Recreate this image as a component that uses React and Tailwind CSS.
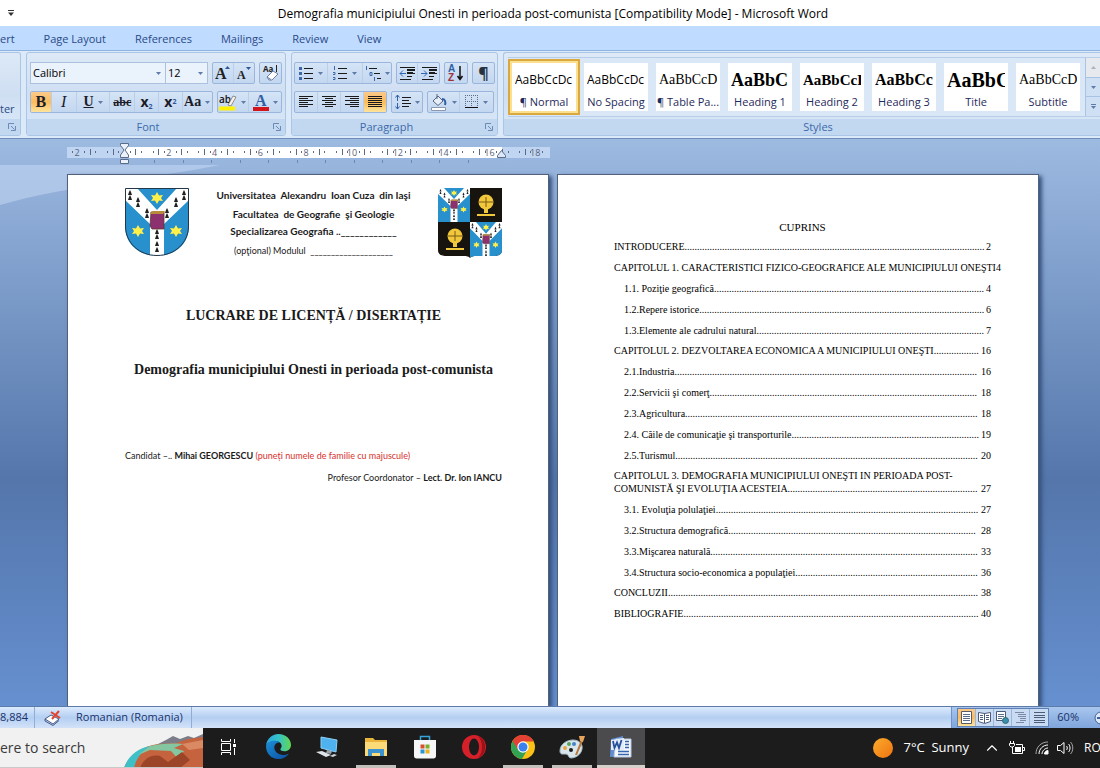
import { ChevronUp } from 'lucide-react';

const tabs = ['Page Layout', 'References', 'Mailings', 'Review', 'View'];

const styles = [
  { name: 'No Spacing', sample: 'AaBbCcDc', look: 'font-["Open_Sans"] text-xs' },
  { name: '¶ Table Pa...', sample: 'AaBbCcD', look: 'font-["Liberation_Serif"] text-sm' },
  { name: 'Heading 1', sample: 'AaBbC', look: 'font-["Liberation_Serif"] text-lg font-bold' },
  { name: 'Heading 2', sample: 'AaBbCcD', look: 'font-["Liberation_Serif"] text-[15px] font-bold' },
  { name: 'Heading 3', sample: 'AaBbCc', look: 'font-["Liberation_Serif"] text-base font-bold' },
  { name: 'Title', sample: 'AaBbC', look: 'font-["Liberation_Serif"] text-xl font-bold' },
  { name: 'Subtitle', sample: 'AaBbCcD', look: 'font-["Liberation_Serif"] text-sm' },
];

// dots is the length of the leader between a heading and its page number
const contents = [
  { title: 'INTRODUCERE', page: 2, dots: 120 },
  {
    title: 'CAPITOLUL 1. CARACTERISTICI FIZICO-GEOGRAFICE ALE MUNICIPIULUI ONEŞTI',
    page: 4,
    dots: 0,
    items: [
      ['1.1. Poziţie geografică', 4, 108],
      ['1.2.Repere istorice', 6, 114],
      ['1.3.Elemente ale cadrului natural', 7, 91],
    ],
  },
  {
    title: 'CAPITOLUL 2. DEZVOLTAREA ECONOMICA A MUNICIPIULUI ONEŞTI',
    page: 16,
    dots: 18,
    items: [
      ['2.1.Industria', 16, 121],
      ['2.2.Servicii şi comerţ', 18, 107],
      ['2.3.Agricultura', 18, 117],
      ['2.4. Căile de comunicaţie şi transporturile', 19, 75],
      ['2.5.Turismul', 20, 121],
    ],
  },
  {
    lead: 'CAPITOLUL 3. DEMOGRAFIA MUNICIPIULUI ONEŞTI IN PERIOADA POST-',
    title: 'COMUNISTĂ ŞI EVOLUŢIA ACESTEIA',
    page: 27,
    dots: 76,
    items: [
      ['3.1. Evoluţia polulaţiei', 27, 105],
      ['3.2.Structura demografică', 28, 99],
      ['3.3.Mişcarea naturală', 33, 107],
      ['3.4.Structura socio-economica a populaţiei', 36, 73],
    ],
  },
  { title: 'CONCLUZII', page: 38, dots: 124 },
  { title: 'BIBLIOGRAFIE', page: 40, dots: 118 },
];

function Arrow() {
  return (
    <svg width="5" height="3" viewBox="0 0 5 3" className="shrink-0"><path d="M0 0h5L2.500 3z" fill="#5f7ba8" /></svg>
  );
}

function Launcher() {
  return (
    <svg width="8" height="8" viewBox="0 0 8 8" fill="none" stroke="#6d8ab5">
      <path d="M.5 6V.5H6M3 3l3.500 3.500M7.500 3v4.500H3" />
    </svg>
  );
}

function Group({ label, launcher, className, labelClass = 'pr-2', children }) {
  return (
    <section className={`flex h-[84px] flex-col overflow-hidden rounded-[3px] border border-[#a9c6e6] bg-linear-to-b from-[#dde9f7] via-[#cfdff2] to-[#dbe9f9] ${className}`}>
      <div className="flex-1">{children}</div>
      <div className="flex h-4 items-center bg-[#c1d8f0] px-1 text-[#3e6aaa]">
        <h2 className={`flex-1 text-center ${labelClass}`}>{label}</h2>
        {launcher && <button aria-label={`${label} options`}><Launcher /></button>}
      </div>
    </section>
  );
}

function Bar({ children }) {
  return <div className="flex h-[22px] divide-x divide-[#b9cfe9] overflow-hidden rounded-[2px] border border-[#9ab6dc] bg-linear-to-b from-[#d5e4f6] to-[#c3d7f0]">{children}</div>;
}

function Tool({ label, width, active, arrow, children }) {
  return (
    <button aria-label={label} className={`flex items-center justify-center gap-1 ${width} ${active ? 'bg-linear-to-b from-[#fbc98a] via-[#f9bb5c] to-[#fde49b]' : ''}`}>
      {children}
      {arrow && <Arrow />}
    </button>
  );
}

function Lines({ d, children }) {
  return (
    <svg width="16" height="16" viewBox="0 0 16 16" fill="none" stroke="#1a1a1a">
      <path d={d} />
      {children}
    </svg>
  );
}

function FontGroup() {
  return (
    <Group label="Font" launcher className="w-[260px]">
      <div className="flex flex-col gap-[7px] px-[3px] pt-[9px]">
        <div className="flex gap-1">
          <div className="flex">
            <label className="flex h-[22px] w-[136px] items-center border border-[#abc1de] bg-[#eaf2fb] pr-1">
              <select aria-label="Font name" className="flex-1 appearance-none px-[2px] text-black"><option>Calibri</option></select>
              <Arrow />
            </label>
            <label className="-ml-px flex h-[22px] w-[43px] items-center border border-[#abc1de] bg-[#eaf2fb] pr-1">
              <select aria-label="Font size" className="flex-1 appearance-none px-[2px] text-black"><option>12</option></select>
              <Arrow />
            </label>
          </div>
          <Bar>
            <Tool label="Grow font" width="w-[21px]">
              <svg width="16" height="18" viewBox="0 0 16 18"><text x="0" y="15" fontSize="16" fontWeight="bold" fontFamily="Liberation Serif" fill="#222">A</text><path d="M10 5l2.500-3L15 5z" fill="#2f5597" /></svg>
            </Tool>
            <Tool label="Shrink font" width="w-[21px]">
              <svg width="16" height="18" viewBox="0 0 16 18"><text x="1" y="15" fontSize="12" fontWeight="bold" fontFamily="Liberation Serif" fill="#222">A</text><path d="M10 3h5l-2.500 3z" fill="#2f5597" /></svg>
            </Tool>
          </Bar>
          <Bar>
            <Tool label="Clear formatting" width="w-[21px]">
              <svg width="18" height="18" viewBox="0 0 18 18"><text x="1" y="8" fontSize="8" fontWeight="bold" fontFamily="Open Sans" fill="#222">Aa</text><path d="M14.500 1v7" stroke="#222" /><path d="M5 13l6-6 5 3-6 6H7z" fill="#fff" stroke="#6a7fa3" /><path d="M5 13l4 2.500" stroke="#6a7fa3" /></svg>
            </Tool>
          </Bar>
        </div>
        <div className="flex gap-1 font-['Liberation_Serif'] text-base leading-none text-[#1c1c28]">
          <Bar>
            <Tool label="Bold" width="w-[21px]" active><b>B</b></Tool>
            <Tool label="Italic" width="w-[25px]"><i>I</i></Tool>
            <Tool label="Underline" width="w-[34px]" arrow><b className="text-sm underline">U</b></Tool>
            <Tool label="Strikethrough" width="w-[25px]"><b className="text-xs line-through">abc</b></Tool>
            <Tool label="Subscript" width="w-6"><b className="font-['Open_Sans'] text-sm">x<sub className="text-[7px] text-[#2f5597]">2</sub></b></Tool>
            <Tool label="Superscript" width="w-6"><b className="font-['Open_Sans'] text-sm">x<sup className="text-[7px] text-[#2f5597]">2</sup></b></Tool>
            <Tool label="Change case" width="w-[29px]" arrow><b className="text-sm">Aa</b></Tool>
          </Bar>
          <Bar>
            <Tool label="Highlight" width="w-8" arrow>
              <svg width="18" height="18" viewBox="0 0 18 18"><text x="0" y="10" fontSize="10" fontWeight="600" fontFamily="Open Sans" fill="#111">ab</text><path d="M9 12l5-9 3 1-5 9z" fill="#f6f2e8" stroke="#777" strokeWidth=".8" /><path d="M0 13.500h16v4H0z" fill="#fff200" /></svg>
            </Tool>
            <Tool label="Font color" width="w-8" arrow>
              <svg width="16" height="18" viewBox="0 0 16 18"><text x="2" y="13" fontSize="16" fontWeight="bold" fontFamily="Liberation Serif" fill="#2f5fa5">A</text><path d="M0 14h16v4H0z" fill="#d3141c" /></svg>
            </Tool>
          </Bar>
        </div>
      </div>
    </Group>
  );
}

function ParagraphGroup() {
  return (
    <Group label="Paragraph" launcher className="w-[207px]">
      <div className="flex flex-col gap-[7px] px-[2px] pt-[9px]">
        <div className="flex gap-1">
          <Bar>
            <Tool label="Bullets" width="w-[33px]" arrow>
              <Lines d="M6 3.500h9M6 8.500h9M6 13.500h9"><path d="M1 3.500h3M1 8.500h3M1 13.500h3" stroke="#3c67a8" strokeWidth="3" /></Lines>
            </Tool>
            <Tool label="Numbering" width="w-[35px]" arrow>
              <Lines d="M6 3.500h9M6 8.500h9M6 13.500h9"><path d="M2.500 1v4M1 7.500h2v2H1M1 12.500h2v2H1" stroke="#3c67a8" /></Lines>
            </Tool>
            <Tool label="Multilevel list" width="w-[29px]" arrow>
              <Lines d="M4 3.500h8M9 8.500h6M12 13.500h4"><path d="M1.500 1v4M5 7.500h2v3H5zM9.500 12v4" stroke="#3c67a8" /></Lines>
            </Tool>
          </Bar>
          <Bar>
            <Tool label="Decrease indent" width="w-[21px]">
              <Lines d="M1 2.500h15M8 5.500h8M8 8.500h8M8 11.500h5M1 14.500h11"><path d="M8 4.500h8M8 7.500h6" /><path d="M7 8.500H1M4 5.500l-3 3 3 3" stroke="#2f66b8" /></Lines>
            </Tool>
            <Tool label="Increase indent" width="w-[21px]">
              <Lines d="M1 2.500h15M8 5.500h8M8 8.500h8M8 11.500h5M1 14.500h11"><path d="M8 4.500h8M8 7.500h6" /><path d="M0 8.500h6M3 5.500l3 3-3 3" stroke="#2f66b8" /></Lines>
            </Tool>
          </Bar>
          <Bar>
            <Tool label="Sort" width="w-[22px]">
              <svg width="18" height="18" viewBox="0 0 18 18"><text x="1" y="8" fontSize="10" fontWeight="bold" fontFamily="Liberation Sans" fill="#2f5fa5">A</text><text x="1" y="17" fontSize="10" fontWeight="bold" fontFamily="Liberation Sans" fill="#a0303c">Z</text><path d="M13 2v12M10.500 12l2.500 3.500 2.500-3.500" fill="none" stroke="#111" strokeWidth="1.500" /></svg>
            </Tool>
          </Bar>
          <Bar>
            <Tool label="Show marks" width="w-[21px]"><span className="text-base font-bold leading-none text-[#28323f]">¶</span></Tool>
          </Bar>
        </div>
        <div className="flex gap-1">
          <Bar>
            <Tool label="Align left" width="w-[23px]"><Lines d="M1 2.500h14M1 4.500h9M1 6.500h14M1 8.500h9M1 10.500h14M1 12.500h9" /></Tool>
            <Tool label="Center" width="w-[23px]"><Lines d="M1 2.500h14M4 4.500h8M1 6.500h14M4 8.500h8M1 10.500h14M4 12.500h8" /></Tool>
            <Tool label="Align right" width="w-[23px]"><Lines d="M1 2.500h14M6 4.500h9M1 6.500h14M6 8.500h9M1 10.500h14M6 12.500h9" /></Tool>
            <Tool label="Justify" width="w-[22px]" active><Lines d="M1 2.500h14M1 4.500h14M1 6.500h14M1 8.500h14M1 10.500h14M1 12.500h14" /></Tool>
          </Bar>
          <Bar>
            <Tool label="Line spacing" width="w-[30px]" arrow>
              <Lines d="M7 3.500h9M7 6.500h7M7 9.500h9M7 12.500h7"><path d="M2.500 1v6M.5 3.500l2-2.500 2 2.500M2.500 9v6M.5 12.500l2 2.500 2-2.500" stroke="#2f5fa5" /></Lines>
            </Tool>
          </Bar>
          <Bar>
            <Tool label="Shading" width="w-[32px]" arrow>
              <svg width="18" height="18" viewBox="0 0 18 18" fill="none" stroke="#56657f"><path d="M3 8l5-5 5 5-5 4.500z" fill="#e7eef8" /><path d="M7 1v5" /><path d="M12 6c3 0 4 3 3 6" stroke="#2f5fa5" strokeWidth="2" /><path d="M1.500 14.500h14v3h-14z" fill="#fff" stroke="#8a98ae" /></svg>
            </Tool>
            <Tool label="Borders" width="w-[33px]" arrow>
              <svg width="14" height="14" viewBox="0 0 14 14" fill="none"><path d="M.5 0v13M6.500 0v13M12.500 0v13M0 .5h13M0 6.500h13" stroke="#5c6c88" strokeDasharray="1 1" /><path d="M0 12.500h13" stroke="#111" /></svg>
            </Tool>
          </Bar>
        </div>
      </div>
    </Group>
  );
}

function StyleCard({ name, sample, look }) {
  return (
    <button className="h-12 w-16 overflow-hidden bg-white text-[#1f2a5c]">
      <span className={`mx-[3px] block h-[30px] overflow-hidden text-left leading-8 whitespace-nowrap text-black ${look}`}>{sample}</span>
      <span className="block text-[11px] leading-4 whitespace-nowrap">{name}</span>
    </button>
  );
}

function StylesGroup() {
  return (
    <Group label="Styles" className="flex-1 rounded-r-none border-r-0" labelClass="pl-8">
      <div className="mt-1 ml-1 flex h-[60px] items-center border-y border-[#b8cde8] bg-[#d9e7f7]">
        <div className="border-2 border-[#d9a93f] bg-[#fbe08f] p-[2px]">
          <StyleCard name="¶ Normal" sample="AaBbCcDc" look='font-["Open_Sans"] text-xs' />
        </div>
        <div className="ml-1 flex flex-1 gap-2 overflow-hidden">
          {styles.map((style) => <StyleCard key={style.name} {...style} />)}
        </div>
        <div className="flex w-[15px] flex-col divide-y divide-[#a9c3e4] self-stretch border-l border-[#a9c3e4]">
          <button aria-label="Scroll up" className="flex flex-1 items-center justify-center bg-[#e6e9ee]"><svg width="5" height="3"><path d="M0 3h5L2.500 0z" fill="#a9b2c0" /></svg></button>
          <button aria-label="Scroll down" className="flex flex-1 items-center justify-center bg-[#cfe0f5]"><Arrow /></button>
          <button aria-label="More styles" className="flex flex-1 flex-col items-center justify-center gap-px bg-[#cfe0f5]"><i className="h-px w-[5px] bg-[#5f7ba8]" /><Arrow /></button>
        </div>
      </div>
    </Group>
  );
}

function Ruler() {
  const unit = 22.9;
  const marks = Array.from({ length: 83 }, (_, i) => i - 9).filter((q) => q % 8 !== 0 && q % 4 !== 0 && 57 + (q * unit) / 4 < 482);
  const numbers = [-2, 2, 4, 6, 8, 10, 12, 14, 16, 18];
  return (
    <svg width="484" height="22" viewBox="0 0 484 22" className="block overflow-visible" role="img" aria-label="Ruler">
      <path d="M0 4h483v11H0z" fill="#bfd5f2" />
      <path d="M57 4h378v11H57z" fill="#fff" />
      {marks.map((q) => (
        <path key={q} d={q % 2 === 0 ? 'M0 6v6' : 'M0 8v2'} transform={`translate(${Math.round(57 + (q * unit) / 4)}.5 0)`} stroke="#5c6b85" />
      ))}
      {numbers.map((n) => (
        <text key={n} x={56 + n * unit} y="13" fontSize="9" fontFamily="Open Sans" fill="#5a6478" textAnchor="middle">{Math.abs(n)}</text>
      ))}
      {Array.from({ length: 12 }, (_, i) => (
        <path key={i} d={`M${87 + Math.round(i * 28.500)}.5 17v3`} stroke="#6d87b0" />
      ))}
      <path d="M53.500.5h8v2L58 7l3.500 5v2.500h-8V12L57 7l-3.500-4.500zM53.500 16.500h8v4h-8z" fill="#eaf1fb" stroke="#5a6c8a" />
      <path d="M430.500 14.500v-2l4-5 4 5v2z" fill="#dce8f7" stroke="#5a6c8a" />
    </svg>
  );
}

function Cross() {
  return (
    <g>
      <path d="M0 0h64v68H0z" fill="#2790cd" />
      <path d="M0 0h12l20 22L52 0h12v12L39 36v32H25V36L0 12z" fill="#fff" />
      <g fill="#222">
        {[[5, 5], [5, 10], [13, 12], [13, 17], [22, 23], [22, 28], [59, 5], [59, 10], [51, 12], [51, 17], [42, 23], [42, 28], [32, 44], [32, 49], [32, 56], [32, 62]].map(([x, y]) => <path key={`${x}-${y}`} d={`M${x} ${y - 3}l1 2 1 3h-4l1-3z`} />)}
      </g>
      <path d="M26 24h13v17H27l-2-3z" fill="#8d3070" stroke="#5b3a2a" strokeWidth=".8" />
      <path d="M25 25l3-2h12l-2 3H26z" fill="#b98a3c" />
      <g fill="#fff04a">
        {[[32, 10], [13, 43], [51, 43]].map(([x, y]) => <path key={x} d={`M${x} ${y - 6}l2 3.500 4-.5-2 3 2 3-4-.5-2 3.500-2-3.500-4 .5 2-3-2-3 4 .5z`} />)}
      </g>
    </g>
  );
}

function UniversityShield() {
  return (
    <svg width="64" height="68" viewBox="0 0 64 68" role="img" aria-label="University arms">
      <clipPath id="shield"><path d="M0 0h64v38c0 18-14 30-32 30S0 56 0 38z" /></clipPath>
      <g clipPath="url(#shield)"><Cross /></g>
      <path d="M.5.5h63V38c0 17-14 29.500-31.500 29.500S.5 55 .5 38z" fill="none" stroke="#22384a" />
    </svg>
  );
}

function Emblem({ x, y }) {
  return (
    <g fill="#f1c73c">
      <circle cx={x} cy={y} r="7.500" />
      <path d={`M${x - 2} ${y + 7}h4v4h-4zM${x - 9} ${y + 12}h18v2h-18z`} />
      <path d={`M${x - 7} ${y}h14M${x} ${y - 5}v10`} stroke="#7a5a14" />
    </g>
  );
}

function FacultyShield() {
  return (
    <svg width="64" height="70" viewBox="0 0 64 70" role="img" aria-label="Faculty arms">
      <clipPath id="quarters"><path d="M0 0h64v62c0 5-4 6-9 6H41c-5 0-7 0-9 2-2-2-4-2-9-2H9c-5 0-9-1-9-6z" /></clipPath>
      <g clipPath="url(#quarters)">
        <path d="M0 0h64v70H0z" fill="#17130e" />
        <g transform="scale(.5 .5)"><Cross /></g>
        <g transform="translate(32 34) scale(.5 .53)"><Cross /></g>
        <Emblem x={48} y={14} />
        <Emblem x={17} y={48} />
      </g>
    </svg>
  );
}

function TitlePage() {
  return (
    <article className="w-[482px] border border-b-0 border-[#51617c] bg-white pt-[13px] pr-[46px] pl-[57px] font-['Lato'] text-[#1a1a1a] shadow-[3px_2px_4px_#37527f]">
      <header className="flex justify-between">
        <UniversityShield />
        <div className="flex flex-1 flex-col items-center text-[10px] font-bold">
          <p className="h-[19px] leading-[14px] whitespace-pre">Universitatea  Alexandru  Ioan Cuza  din Iaşi</p>
          <p className="h-[21px] leading-[14px] whitespace-pre">Facultatea  de Geografie  şi Geologie</p>
          <p className="flex h-[10px] items-end overflow-hidden leading-[13px] whitespace-pre">Specializarea Geografia ..____________</p>
          <p className="mt-2 flex h-3 items-end overflow-hidden text-[9px] leading-[14px] font-normal whitespace-pre">(opţional) Modulul  ____________________</p>
        </div>
        <FacultyShield />
      </header>
      <h1 className="mt-12 text-center font-['Liberation_Serif'] text-sm leading-5 font-bold">LUCRARE DE LICENȚĂ / DISERTAȚIE</h1>
      <h2 className="mt-[34px] text-center font-['Liberation_Serif'] text-sm leading-5 font-bold">Demografia municipiului Onesti in perioada post-comunista</h2>
      <p className="mt-[69px] text-[9px] leading-[14px]">Candidat –.. <b>Mihai GEORGESCU</b> <span className="text-[#d8302c]">(puneți numele de familie cu majuscule)</span></p>
      <p className="mt-2 text-right text-[9px] leading-[14px]">Profesor Coordonator – <b>Lect. Dr. Ion IANCU</b></p>
    </article>
  );
}

function Entry({ title, page, dots }) {
  return (
    <a href="#contents" className="flex justify-between whitespace-nowrap">
      <span>{title}{'.'.repeat(dots)}</span>
      <span>{page}</span>
    </a>
  );
}

function ContentsPage() {
  return (
    <article id="contents" className="w-[482px] border border-b-0 border-[#51617c] bg-white pt-[46px] pr-[47px] pl-14 font-['Liberation_Serif'] text-[10px] leading-[13px] text-black shadow-[3px_2px_4px_#37527f]">
      <h2 className="pb-1.5 text-center text-[11px]">CUPRINS</h2>
      {contents.map(({ lead, title, page, dots, items = [] }) => (
        <section key={title}>
          <div className="pb-2">
            {lead && <p>{lead}</p>}
            <Entry title={title} page={page} dots={dots} />
          </div>
          {items.map(([name, at, leader]) => (
            <div key={name} className="pb-2 pl-[10px] last:pb-[7px]"><Entry title={name} page={at} dots={leader} /></div>
          ))}
        </section>
      ))}
    </article>
  );
}

function Workspace() {
  return (
    <main className="relative flex-1 overflow-hidden border-t border-[#6e8db8] bg-linear-to-b from-[#9dbae1] via-[#5476ab] via-60% to-[#6690d0] pt-1">
      <svg className="absolute inset-x-0 top-[26px] h-40 w-full" viewBox="0 0 1100 160" preserveAspectRatio="none">
        <path d="M0 0h220C150 14 70 20 0 40z" fill="#c9dcf5" opacity=".5" />
      </svg>
      <div className="relative mx-auto flex h-full w-[972px] translate-x-[3px] flex-col gap-[9px]">
        <Ruler />
        <div className="flex flex-1 gap-2">
          <TitlePage />
          <ContentsPage />
        </div>
      </div>
    </main>
  );
}

function StatusBar() {
  return (
    <footer className="flex h-[22px] shrink-0 items-center border-t border-[#5c7ba8] bg-linear-to-b from-[#dceafd] via-[#b4cff2] to-[#d3e2f8] text-[#17316b]">
      <span className="w-[34px]">8,884</span>
      <button aria-label="Proofing" className="flex h-full w-9 items-center justify-center border-l border-[#8fadd6]">
        <svg width="18" height="16" viewBox="0 0 18 16" fill="none"><path d="M1 9l6-4 8 4-6 5z" fill="#fff" stroke="#44598a" /><path d="M1 9v2l8 4.500 6-5" stroke="#44598a" /><path d="M7 2l9 6M15 1L8 9" stroke="#e0452f" strokeWidth="2" /></svg>
      </button>
      <button className="h-full border-r border-[#8fadd6] pr-2 pl-1.5">Romanian (Romania)</button>
      <div className="ml-auto flex h-full items-center border-l border-[#6f93c8] bg-linear-to-b from-[#a9c6ee] to-[#7fa5db] pl-[5px]">
        <div className="flex h-[19px] divide-x divide-[#9ab6dc] border border-[#5f80b2] bg-[#c9dbf2]">
          <Tool label="Print layout" width="w-[18px]" active><svg width="13" height="13" viewBox="0 0 13 13"><path d="M1.500.5h10v12h-10z" fill="#fff" stroke="#5a5a66" /><path d="M3 3.500h7M3 5.500h7M3 7.500h7M3 9.500h7" stroke="#5a6c8a" /></svg></Tool>
          <Tool label="Reading view" width="w-[18px]"><svg width="13" height="13" viewBox="0 0 13 13"><path d="M.5 1.500l6 1 6-1v9l-6 2-6-2z" fill="#fff" stroke="#4a5a78" /><path d="M6.500 2v10M2 4.500h3M2 6.500h3M2 8.500h3M8 4.500h3M8 6.500h3M8 8.500h3" stroke="#4a5a78" /></svg></Tool>
          <Tool label="Web layout" width="w-[18px]"><svg width="13" height="13" viewBox="0 0 13 13"><path d="M.5.5h9v9h-9z" fill="#fff" stroke="#4a5a78" /><path d="M2 3.500h6M2 5.500h6M2 7.500h4" stroke="#5a6c8a" /><circle cx="9.500" cy="9.500" r="3" fill="#3a8fb0" stroke="#2f6a70" /></svg></Tool>
          <Tool label="Outline" width="w-[18px]"><svg width="13" height="13" viewBox="0 0 13 13"><path d="M1 1.500h9M4 3.500h8M4 5.500h8M6 7.500h6M6 9.500h6M2 11.500h8" stroke="#7a8aa6" /></svg></Tool>
          <Tool label="Draft" width="w-[18px]"><svg width="13" height="13" viewBox="0 0 13 13"><path d="M1 1.500h11M1 4.500h11M1 6.500h11M1 9.500h11M1 11.500h11" stroke="#4d5c76" /></svg></Tool>
        </div>
        <button className="pr-[15px] pl-2">60%</button>
        <button aria-label="Zoom out" className="w-[6px] overflow-hidden"><svg width="14" height="14" viewBox="0 0 14 14"><circle cx="7" cy="7" r="6" fill="#dce8f7" stroke="#3f5f94" /><path d="M3 7h8" stroke="#3f5f94" strokeWidth="2" /></svg></button>
      </div>
    </footer>
  );
}

const apps = [
  {
    name: 'Task View',
    icon: <svg width="16" height="16" viewBox="0 0 16 16" fill="none" stroke="#fff"><path d="M.5 0v2.500h9V0M.5 16v-2.500h9V16M.5 4.500h9v7h-9zM13.500 0v4M13.500 9v7" /><path d="M12 5h3v3h-3z" fill="#fff" stroke="none" /></svg>,
  },
  {
    name: 'Edge',
    icon: (
      <svg width="25" height="25" viewBox="0 0 24 24">
        <defs>
          <linearGradient id="edgeTop" x1="0" x2="1"><stop offset="0" stopColor="#2aa5e0" /><stop offset=".5" stopColor="#35c1c9" /><stop offset="1" stopColor="#63d84f" /></linearGradient>
          <linearGradient id="edgeBody" x1="0" y1="0" x2="1" y2="1"><stop offset="0" stopColor="#1b8fd9" /><stop offset="1" stopColor="#0c4f9f" /></linearGradient>
        </defs>
        <path d="M0 11.500C.5 5 5.500 0 12 0c7 0 12 5 12 10.500 0 3.500-2.700 6-6.200 6-2.600 0-4-.9-4-1.900 0-.8 1.200-1.200 1.200-3.100 0-2.400-2.200-4.500-5.400-4.500C5 7 1 8.500 0 11.500z" fill="url(#edgeTop)" />
        <path d="M0 11.500C1 8.200 4.600 6.500 8 6.500c2 0 4 .6 5.200 1.700C10 8 8 10.300 8 13c0 3.600 3.600 7.200 8.500 7.200 2.300 0 4-.7 5.500-1.500C20 22 16 24 12 24 5 24 0 18.800 0 11.500z" fill="url(#edgeBody)" />
      </svg>
    ),
  },
  {
    name: 'Remote PC',
    icon: <svg width="24" height="24" viewBox="0 0 24 24"><path d="M6 2l16 3-1 12-15-4z" fill="#4db2ee" stroke="#8ed0f5" /><path d="M12 15l5 1-1 3-5-1z" fill="#9aa4ae" /><path d="M1 17l6-1 9 4-5 2z" fill="#dfe4e8" /><path d="M15 21l4-2 3 1-4 2z" fill="#cdd3d8" /></svg>,
  },
  {
    name: 'Explorer',
    open: true,
    icon: <svg width="24" height="22" viewBox="0 0 24 22"><path d="M1 2h8l2 2h12v15H1z" fill="#e9b53a" /><path d="M1 6h22v14H1z" fill="#fbdb77" /><path d="M4 20v-7h16v7h-4v-3H8v3z" fill="#3d93cf" /></svg>,
  },
  {
    name: 'Store',
    icon: <svg width="24" height="24" viewBox="0 0 24 24"><path d="M7.500 5V1.500h9V5" fill="none" stroke="#36a3dc" strokeWidth="1.500" /><path d="M1 5h22v16c0 1.500-1 2.500-2.500 2.500h-17C2 23.500 1 22.500 1 21z" fill="#f5f7f8" /><path d="M7.500 9.500h4v4h-4z" fill="#d94f2f" /><path d="M12.500 9.500h4v4h-4z" fill="#7caf2a" /><path d="M7.500 14.500h4v4h-4z" fill="#2b93d6" /><path d="M12.500 14.500h4v4h-4z" fill="#edb11d" /></svg>,
  },
  {
    name: 'Opera',
    icon: <svg width="24" height="24" viewBox="0 0 24 24"><circle cx="12" cy="12" r="12" fill="#d5202a" /><path d="M16 1a12 12 0 0 1 0 22c3-3 4-7 4-11s-1-8-4-11z" fill="#9c1017" /><ellipse cx="12" cy="12" rx="5" ry="8.500" fill="#1c1c1c" /></svg>,
  },
  {
    name: 'Chrome',
    open: true,
    icon: <svg width="24" height="24" viewBox="0 0 24 24"><circle cx="12" cy="12" r="12" fill="#fbc116" /><path d="M12 12L1.600 6A12 12 0 0 0 11 24l5.500-9.500z" fill="#31a352" /><path d="M12 12V6.500h10.700A12 12 0 0 0 1.600 6l5.200 8.500z" fill="#e34133" /><circle cx="12" cy="12" r="5.700" fill="#fff" /><circle cx="12" cy="12" r="4.500" fill="#3b82ee" /></svg>,
  },
  {
    name: 'Paint',
    open: true,
    icon: <svg width="26" height="24" viewBox="0 0 26 24"><path d="M1 16C1 9 8 5 14 5s10 4 9 9c-1 6-7 9-11 9-3 0-2-4-5-4s-6 1-6-3z" fill="#d8e6ec" stroke="#a5bcc6" /><circle cx="6" cy="13" r="2" fill="#e5a63a" /><circle cx="10" cy="9" r="2" fill="#57a55a" /><circle cx="15" cy="9" r="2" fill="#4484c8" /><circle cx="12" cy="15" r="2" fill="#1c1c1c" /><path d="M16 20L22 5l2 1-6 14z" fill="#b8773c" /><path d="M20 1l6 0-2 6-3-1z" fill="#e7a55c" /></svg>,
  },
  {
    name: 'Word',
    active: true,
    icon: <svg width="24" height="22" viewBox="0 0 24 22"><path d="M2 3L14 0v20L1 21z" fill="#5f8fd0" /><path d="M7 3h15v18H5z" fill="#f5f8fd" stroke="#b8c8e0" /><path d="M2 4l13-2v12L2 14z" fill="#e4ecf8" /><path d="M4 5l1.500 7L8 6.500l2 5.500 2.500-8" fill="none" stroke="#24509c" strokeWidth="1.800" /><path d="M16 5.500h4M16 8.500h4M16 11.500h4M9 15.500h11M9 18.500h11" stroke="#3566b0" strokeWidth="1.500" /></svg>,
  },
];

function Taskbar() {
  return (
    <nav className="flex h-10 shrink-0 items-stretch bg-[#1c1c1c] text-white">
      <div className="flex w-[203px] justify-between overflow-hidden border-b border-[#c8c8c8] bg-[#f1f1f1]">
        <input aria-label="Search" defaultValue="ere to search" className="w-[110px] text-sm text-[#3a3a3a]" />
        <svg width="79" height="40" viewBox="0 0 79 40">
          <path d="M30 18l12-6 7-4 7 3 8-3 6 2 9-4v34H20z" fill="#7c7b88" />
          <path d="M0 40c4-12 18-22 34-24l18-1 12-4 15-2v31z" fill="#c4633e" />
          <path d="M0 40c4-12 14-20 26-22-8 6-14 12-16 22z" fill="#3fc0c6" />
          <path d="M26 18c8-2 20-3 33-2l-9 4 10 3-6 8-7-8-21-1-12 5z" fill="#83c6a0" />
          <path d="M16 40c4-10 12-14 20-12l8 6 14-10 8 8-10 8z" fill="#9b4427" />
          <path d="M58 16l21-4v8l-14 2z" fill="#d98a63" />
        </svg>
      </div>
      <div className="ml-0.5 flex gap-px">
        {apps.map(({ name, icon, open, active }) => (
          <button key={name} aria-label={name} className={`flex w-12 flex-col items-center ${active ? 'bg-[#4b4b4e]' : ''}`}>
            <span className="flex flex-1 items-center">{icon}</span>
            <i className={`h-[3px] ${active ? 'w-12 bg-[#d6cfca]' : open ? 'w-10 bg-[#c3bfba]' : ''}`} />
          </button>
        ))}
      </div>
      <div className="ml-auto flex items-center">
        <svg width="20" height="20" viewBox="0 0 20 20"><defs><linearGradient id="sun" x2="1" y2="1"><stop offset="0" stopColor="#fbab2c" /><stop offset="1" stopColor="#ef7411" /></linearGradient></defs><circle cx="10" cy="10" r="10" fill="url(#sun)" /></svg>
        <span className="ml-2.5 text-[13px] whitespace-pre">7°C  Sunny</span>
        <ChevronUp size={18} strokeWidth={1.5} className="ml-3.5" />
        <svg width="16" height="14" viewBox="0 0 16 14" fill="none" stroke="#fff" className="ml-2"><path d="M1.500 0v2M4.500 0v2M.5 2.500h5v2l-1.500 1.500h-2L.5 4.500zM3.500 6v6.500h10v-9H7M14 6.500h1.500v3H14" /><path d="M6 6h6v5H6z" fill="#fff" stroke="none" /></svg>
        <svg width="14" height="14" viewBox="0 0 14 14" fill="none" stroke="#fff" className="ml-2.5"><path d="M1 13C1 6 6 1 13 1" opacity=".6" /><path d="M4 13c0-5 4-9 9-9M7 13c0-3 3-6 6-6" /><path d="M9.500 13c0-2 1.500-3.500 3.500-3.500V13z" fill="#fff" /></svg>
        <svg width="17" height="14" viewBox="0 0 17 14" fill="none" stroke="#fff" className="ml-2"><path d="M.5 4.500h3L7 1.500v11L3.500 9.500h-3zM9.500 5c1 1 1 3 0 4M11.500 3c2 2 2 6 0 8" /><path d="M13.500 1c3 3 3 9 0 12" opacity=".6" /></svg>
        <span className="ml-2.5 w-4 text-xs">RO</span>
      </div>
    </nav>
  );
}

export default function App() {
  return (
    <div className="flex h-screen flex-col overflow-hidden bg-white font-['Open_Sans',sans-serif] text-[11px]">
      <header className="flex h-[26px] shrink-0 items-center pr-2 pl-2">
        <button aria-label="Customize toolbar"><svg width="6" height="6" viewBox="0 0 6 6"><path d="M0 .5h6" stroke="#333" /><path d="M0 2.500h6L3 6z" fill="#333" /></svg></button>
        <h1 className="flex-1 pt-0.5 text-center text-xs text-black">Demografia municipiului Onesti in perioada post-comunista [Compatibility Mode] - Microsoft Word</h1>
      </header>
      <nav className="flex h-6 shrink-0 items-center gap-[29px] bg-[#bfdbff] pt-0.5 text-[#2a4a86]">
        <button>ert</button>
        {tabs.map((tab) => <button key={tab}>{tab}</button>)}
      </nav>
      <div className="flex h-[88px] shrink-0 gap-[5px] border-t border-[#8fb3e0] bg-[#dce9f8] pt-px">
        <Group label="" launcher className="w-[21px] rounded-l-none border-l-0" labelClass="">
          <p className="mt-[48px] text-[#2a4a86]">ter</p>
        </Group>
        <FontGroup />
        <ParagraphGroup />
        <StylesGroup />
      </div>
      <Workspace />
      <StatusBar />
      <Taskbar />
    </div>
  );
}
